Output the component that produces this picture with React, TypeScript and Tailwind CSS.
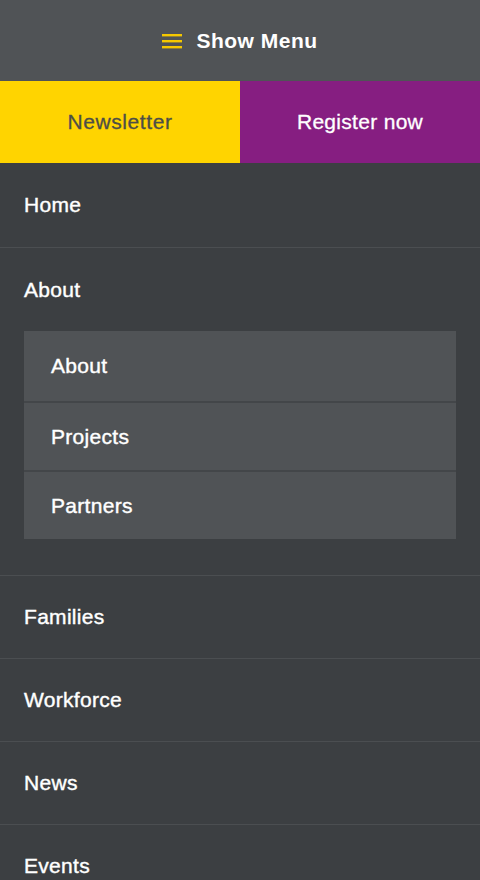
const mainLinks = ["Families", "Workforce", "News", "Events"]
const subLinks = ["About", "Projects", "Partners"]

function Hamburger() {
  return (
    <svg width="20" height="16" viewBox="0 0 20 16" className="shrink-0">
      <rect x="0" y="1" width="20" height="2.4" fill="#f5c800" />
      <rect x="0" y="7" width="20" height="2.4" fill="#f5c800" />
      <rect x="0" y="13" width="20" height="2.4" fill="#f5c800" />
    </svg>
  )
}

export default function App() {
  return (
    <div
      className="min-h-[880px] w-[480px] bg-[#3c3f42] text-white"
      style={{ fontFamily: '"Liberation Sans", Arial, sans-serif' }}
    >
      {/* Show Menu bar */}
      <div className="flex h-[81px] items-center justify-center gap-[14px] bg-[#505356]">
        <Hamburger />
        <span className="text-[21px] font-bold tracking-[0.5px]">Show Menu</span>
      </div>

      {/* Action buttons */}
      <div className="grid h-[82px] grid-cols-2 [-webkit-text-stroke:0.3px_currentColor]">
        <a className="flex items-center justify-center bg-[#ffd400] text-[21px] tracking-[0.6px] text-[#4d4e47]">
          Newsletter
        </a>
        <a className="flex items-center justify-center bg-[#861e81] text-[21px] tracking-[0.3px] text-white">
          Register now
        </a>
      </div>

      <ul className="[-webkit-text-stroke:0.4px_currentColor]">
        <li className="flex h-[85px] items-center border-b border-[#4b4e51] px-6 text-[21px] tracking-[0.3px]">
          Home
        </li>
        <li className="border-b border-[#4b4e51] pb-9">
          <div className="flex h-[83px] items-center px-6 text-[21px] tracking-[0.3px]">About</div>
          <ul className="mx-6 bg-[#505356]">
            {subLinks.map((item, i) => (
              <li
                key={item}
                className={`flex items-center px-[27px] text-[21px] tracking-[0.3px] ${
                  i > 0 ? "h-[69px] border-t-2 border-[#434649]" : "h-[70px]"
                }`}
              >
                {item}
              </li>
            ))}
          </ul>
        </li>
        {mainLinks.map((item) => (
          <li
            key={item}
            className="flex h-[83px] items-center border-b border-[#4b4e51] px-6 text-[21px] tracking-[0.3px]"
          >
            {item}
          </li>
        ))}
      </ul>
    </div>
  )
}
